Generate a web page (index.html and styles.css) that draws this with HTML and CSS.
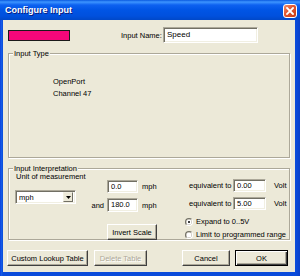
FILE: index.html
```html
<!DOCTYPE html>
<html>
<head>
<meta charset="utf-8">
<link rel="stylesheet" href="styles.css">
</head>
<body>
<div class="win">
  <div class="titlebar">
    <span class="title">Configure Input</span>
    <span class="close"><svg width="8" height="8" viewBox="0 0 8 8"><path d="M1 1L7 7M7 1L1 7" stroke="#fff" stroke-width="1.8" stroke-linecap="square"/></svg></span>
  </div>
  <div class="client">
    <div class="row-name">
      <div class="swatch"></div>
      <span class="name-label">Input Name:</span>
      <div class="field name-field">Speed</div>
    </div>
    <div class="group type-group">
      <span class="group-label">Input Type</span>
      <div class="type-lines">
        <div>OpenPort</div>
        <div>Channel 47</div>
      </div>
    </div>
    <div class="group interp-group">
      <span class="group-label">Input Interpretation</span>
      <div class="interp">
        <div class="col-unit">
          <div class="unit-label">Unit of measurement</div>
          <div class="combo">
            <span class="combo-text">mph</span>
            <span class="combo-btn"><svg width="5" height="3" viewBox="0 0 5 3"><path d="M0 0H5L2.5 3Z" fill="#000"/></svg></span>
          </div>
        </div>
        <div class="col-range">
          <div class="range-row"><span class="pre"></span><div class="field num">0.0</div><span class="unit">mph</span></div>
          <div class="range-row second"><span class="pre">and</span><div class="field num">180.0</div><span class="unit">mph</span></div>
          <div class="btn invert">Invert Scale</div>
        </div>
        <div class="col-volt">
          <div class="volt-row"><span class="eq">equivalent to</span><div class="field volt">0.00</div><span class="unit">Volt</span></div>
          <div class="volt-row second"><span class="eq">equivalent to</span><div class="field volt">5.00</div><span class="unit">Volt</span></div>
          <div class="radio-row first"><span class="radio on"></span><span>Expand to 0..5V</span></div>
          <div class="radio-row"><span class="radio"></span><span>Limit to programmed range</span></div>
        </div>
      </div>
    </div>
    <div class="buttons">
      <div class="btn custom">Custom Lookup Table</div>
      <div class="btn delete disabled">Delete Table</div>
      <div class="spacer"></div>
      <div class="btn cancel">Cancel</div>
      <div class="btn ok"><span>OK</span></div>
    </div>
  </div>
</div>
</body>
</html>
```

FILE: styles.css
```css
* { box-sizing: border-box; }
html, body { margin: 0; padding: 0; }
body {
  width: 300px; height: 276px; overflow: hidden;
  font-family: "Liberation Sans", Arial, sans-serif;
  font-size: 7.5px; color: #000;
}
.win {
  width: 300px; height: 276px;
  background: linear-gradient(to right, #0831D9 0, #1660E8 1px, #0A4BDB 3px, #0A4BDB 296px, #0A40C8 300px);
  padding: 0 5px 4px 3px;
  display: flex; flex-direction: column;
}
.titlebar {
  height: 20px; margin: 0 -5px 0 -3px; padding: 0 3px 0 5px;
  background: linear-gradient(to bottom, #0A5AE0 0, #3D95FF 2px, #0D61F0 5px, #0055E5 10px, #0050DD 16px, #0048C8 20px);
  display: flex; align-items: center; justify-content: space-between;
}
.title {
  color: #fff; font-weight: bold; font-size: 9px;
  text-shadow: 1px 1px 0 #0A1E80;
}
.close {
  width: 14px; height: 14px; margin-top: 1px;
  border: 1px solid #fff; border-radius: 3px;
  background: linear-gradient(135deg, #F0906E 0, #E25A34 40%, #C83A12 100%);
  display: flex; align-items: center; justify-content: center;
}
.client {
  flex: 1; background: #ECE9D8;
  display: flex; flex-direction: column;
}
.row-name {
  margin-top: 7px; height: 16px; padding-left: 5px;
  display: flex; align-items: center;
}
.swatch {
  width: 62px; height: 11px; background: #F5077A;
  border: 1px solid #1a1a1a;
}
.name-label { margin-left: 51px; width: 42px; }
.field {
  background: #fff;
  border: 1px solid; border-color: #ACA899 #fff #fff #ACA899;
  box-shadow: inset 1px 1px #716F64, inset -1px -1px #F1EFE2;
  padding: 0 3px; display: flex; align-items: center;
  line-height: 10px;
}
.name-field { width: 95px; height: 16px; font-size: 8px; }
.group {
  position: relative;
  margin: 0 5px 0 5px;
  border: 1px solid #ACA899;
  box-shadow: inset 1px 1px #fff, 1px 1px #fff;
}
.group-label {
  position: absolute; top: -5px; left: 4px;
  background: #ECE9D8; padding: 0 1px; line-height: 9px;
}
.type-group { margin-top: 10px; height: 105px; padding: 22px 0 0 44px; }
.type-lines div { line-height: 12px; }
.interp-group { margin-top: 10px; height: 72px; }
.interp { display: flex; padding-left: 6px; }
.col-unit { width: 61px; padding-top: 3px; }
.unit-label { line-height: 10px; margin-left: 1px; white-space: nowrap; }
.combo {
  margin-top: 8px; height: 14px; width: 61px;
  background: #fff;
  border: 1px solid; border-color: #ACA899 #fff #fff #ACA899;
  box-shadow: inset 1px 1px #716F64, inset -1px -1px #F1EFE2;
  display: flex; align-items: center; justify-content: space-between;
  padding: 2px 2px 2px 3px;
}
.combo-btn {
  width: 10px; height: 10px; background: #ECE9D8;
  border: 1px solid; border-color: #F1EFE2 #716F64 #716F64 #F1EFE2;
  display: flex; align-items: center; justify-content: center;
}
.col-range { margin-left: 13px; width: 75px; padding-top: 11px; }
.range-row { display: flex; align-items: center; height: 13px; }
.range-row.second { margin-top: 5px; height: 14px; }
.pre { width: 16px; margin-right: 2px; text-align: right; padding-right: 1px; }
.num { width: 31px; height: 100%; }
.unit { margin-left: 4px; }
.btn {
  background: #ECE9D8;
  border: 1px solid; border-color: #fff #404040 #404040 #fff;
  box-shadow: inset -1px -1px #ACA899;
  display: flex; align-items: center; justify-content: center;
  height: 16px; white-space: nowrap;
}
.invert { margin: 12px 0 0 18px; width: 50px; }
.col-volt { margin-left: 21px; padding-top: 10px; }
.volt-row { display: flex; align-items: center; height: 13px; padding-left: 4px; }
.volt-row.second { margin-top: 5px; }
.eq { width: 44px; }
.volt { width: 33px; height: 100%; }
.volt-row .unit { margin-left: 8px; }
.radio-row { display: flex; align-items: center; height: 13px; }
.radio-row.first { margin-top: 5px; }
.radio {
  width: 8px; height: 8px; border-radius: 50%;
  background: #fff; margin-right: 3px;
  border: 1px solid; border-color: #716F64 #fff #fff #716F64;
  box-shadow: inset 0 0 0 0.5px #ACA899;
  position: relative;
}
.radio.on::after {
  content: ""; position: absolute; left: 2px; top: 2px;
  width: 2px; height: 2px; border-radius: 50%; background: #000;
}
.buttons { margin-top: 10px; padding: 0 7px 0 4px; display: flex; }
.custom { width: 81px; }
.delete { width: 53px; margin-left: 6px; }
.disabled { color: #ACA899; text-shadow: 1px 1px 0 #fff; }
.spacer { flex: 1; }
.cancel { width: 48px; }
.ok { width: 53px; margin-left: 5px; border: 1px solid #000; box-shadow: inset 1px 1px #fff, inset -1px -1px #404040, inset -2px -2px #ACA899; }
```
